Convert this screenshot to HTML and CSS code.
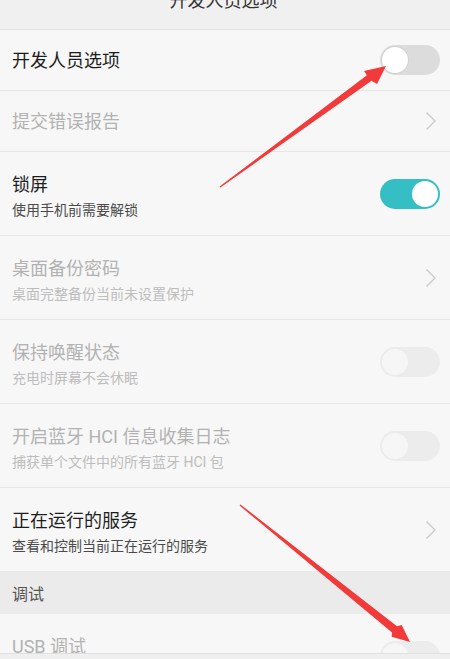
FILE: index.html
```html
<!DOCTYPE html>
<html lang="zh-CN">
<head>
<meta charset="utf-8">
<title>开发人员选项</title>
<link rel="stylesheet" href="styles.css">
</head>
<body>
<div class="screen">
  <header class="topbar"><span class="topbar-title">开发人员选项</span></header>
  <div class="list">
    <div class="row row-single">
      <div class="texts"><div class="title">开发人员选项</div></div>
      <span class="switch switch-off"><span class="knob"></span></span>
    </div>
    <div class="row row-single disabled">
      <div class="texts"><div class="title">提交错误报告</div></div>
      <svg class="chevron" viewBox="0 0 12 20" width="12" height="20"><path d="M1.5 1.5 L10 10 L1.5 18.5" fill="none" stroke="#cacaca" stroke-width="1.4"/></svg>
    </div>
    <div class="row row-double">
      <div class="texts"><div class="title">锁屏</div><div class="sub">使用手机前需要解锁</div></div>
      <span class="switch switch-on"><span class="knob"></span></span>
    </div>
    <div class="row row-double disabled">
      <div class="texts"><div class="title">桌面备份密码</div><div class="sub">桌面完整备份当前未设置保护</div></div>
      <svg class="chevron" viewBox="0 0 12 20" width="12" height="20"><path d="M1.5 1.5 L10 10 L1.5 18.5" fill="none" stroke="#cacaca" stroke-width="1.4"/></svg>
    </div>
    <div class="row row-double disabled">
      <div class="texts"><div class="title">保持唤醒状态</div><div class="sub">充电时屏幕不会休眠</div></div>
      <span class="switch switch-dis"><span class="knob"></span></span>
    </div>
    <div class="row row-double disabled">
      <div class="texts"><div class="title">开启蓝牙 HCI 信息收集日志</div><div class="sub">捕获单个文件中的所有蓝牙 HCI 包</div></div>
      <span class="switch switch-dis"><span class="knob"></span></span>
    </div>
    <div class="row row-double row-last">
      <div class="texts"><div class="title">正在运行的服务</div><div class="sub">查看和控制当前正在运行的服务</div></div>
      <svg class="chevron" viewBox="0 0 12 20" width="12" height="20"><path d="M1.5 1.5 L10 10 L1.5 18.5" fill="none" stroke="#cacaca" stroke-width="1.4"/></svg>
    </div>
    <div class="section">调试</div>
    <div class="row row-double disabled">
      <div class="texts"><div class="title">USB 调试</div></div>
      <span class="switch switch-dis"><span class="knob"></span></span>
    </div>
  </div>
  <div class="footer"></div>
  <svg class="arrows" viewBox="0 0 450 659" width="450" height="659">
    <polygon fill="#f23a3a" points="219.6,186.4 366.9,75.2 364,71 386,66 377,84 371.6,80.8 220.4,187.6"/>
    <polygon fill="#f23a3a" points="240.4,504.4 397,626.3 401.7,625 410,642 391.7,636.7 392,632.4 239.6,505.6"/>
  </svg>
</div>
</body>
</html>
```
FILE: styles.css
```css
* { box-sizing: border-box; }
html, body { margin: 0; padding: 0; }
body {
  font-family: Roboto, "Noto Sans CJK SC", sans-serif;
  background: #f7f7f7;
}
.screen {
  position: relative;
  width: 450px;
  height: 659px;
  overflow: hidden;
  display: flex;
  flex-direction: column;
  background: #f7f7f7;
}
.topbar {
  height: 30px;
  flex: 0 0 30px;
  background: #f0f0f0;
  border-bottom: 1px solid #e2e2e2;
  display: flex;
  justify-content: center;
  align-items: flex-start;
  overflow: hidden;
}
.topbar-title {
  font-size: 18px;
  line-height: 18px;
  margin-top: -8px;
  margin-left: -3px;
  color: #333;
}
.list {
  flex: 0 0 623px;
  height: 623px;
  overflow: hidden;
}
.row {
  display: flex;
  align-items: center;
  justify-content: space-between;
  padding: 0 10px 0 12px;
  background: #f7f7f7;
  border-bottom: 1px solid #e6e6e6;
}
.row-single { height: 61px; }
.row-single .texts { padding-top: 2px; }
.row-double { height: 84px; align-items: flex-start; }
.row-double .texts { padding-top: 21px; }
.row-double .switch { margin-top: 27px; }
.row-double .chevron { margin-top: 32px; }
.row-last { height: 83px; border-bottom: none; }
.title {
  font-size: 18px;
  line-height: 24px;
  color: #1e1e1e;
}
.sub {
  font-size: 14px;
  line-height: 20px;
  margin-top: 3px;
  color: #4a4a4a;
}
.disabled .title { color: #b2b2b2; }
.disabled .sub { color: #bdbdbd; }
.chevron { margin-right: 3px; display: block; }
.switch {
  position: relative;
  display: block;
  width: 60px;
  height: 30px;
  border-radius: 15px;
  flex: 0 0 60px;
}
.switch .knob {
  position: absolute;
  top: 2px;
  width: 26px;
  height: 26px;
  border-radius: 50%;
  background: #fff;
}
.switch-off { background: #dcdcdc; }
.switch-off .knob { left: 2px; box-shadow: 0 0 0 1px #d2d2d2; }
.switch-on { background: #35bfc4; }
.switch-on .knob { right: 2px; }
.switch-dis { background: #ececec; }
.switch-dis .knob { left: 2px; background: #f6f6f6; box-shadow: 0 0 0 1px #ebebeb; }
.section {
  height: 43px;
  background: #ebebeb;
  display: flex;
  align-items: center;
  padding-left: 12px;
  font-size: 16px;
  color: #555;
}
.footer {
  flex: 1 1 auto;
  background: #efefef;
  border-top: 1px solid #e0e0e0;
}
.arrows {
  position: absolute;
  left: 0;
  top: 0;
  pointer-events: none;
}
```
